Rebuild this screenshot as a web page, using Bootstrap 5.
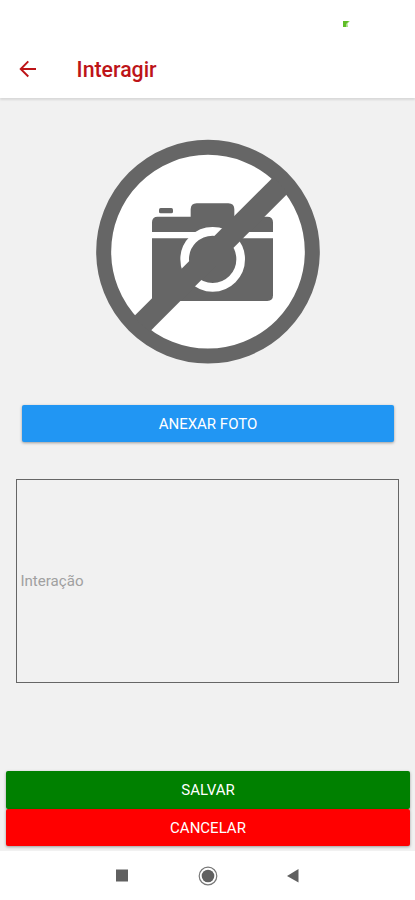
<!DOCTYPE html>
<html lang="pt-BR">
<head>
<meta charset="utf-8">
<meta name="viewport" content="width=device-width, initial-scale=1">
<title>Interagir</title>
<link href="https://cdn.jsdelivr.net/npm/bootstrap@5.3.0/dist/css/bootstrap.min.css" rel="stylesheet">
<style>
body { font-family: Roboto, "Liberation Sans", sans-serif; background: #fff; }
.screen { height: 900px; }
.status-strip { height: 40px; padding: 21px 65px 0 0; }
.app-header { height: 58px; padding: 0 19px; color: #bd1418; box-shadow: 0 2px 2px rgba(0,0,0,.1); z-index: 1; }
.app-title { font-size: 21.3px; font-weight: 500; line-height: 24px; margin-left: 38.6px; padding-top: 2px; }
.page-body { background: #f1f1f1; padding: 32px 5px 5px 6px; }
.photo-area { height: 240px; }
.action { --bs-btn-color: #fff; --bs-btn-hover-color: #fff; --bs-btn-border-width: 0; --bs-btn-border-radius: 2px; --bs-btn-padding-y: 0;
  height: 37.5px; font-size: 15px; line-height: 37px; padding-top: 1px; box-shadow: 0 1px 3px rgba(0,0,0,.36); }
.action-attach { --bs-btn-bg: #2196f3; --bs-btn-hover-bg: #1e88e5; height: 37px; margin: 35px 16px 0; }
.action-save { --bs-btn-bg: #008000; --bs-btn-hover-bg: #007000; }
.action-cancel { --bs-btn-bg: #f00; --bs-btn-hover-bg: #e00000; }
.note { height: 204px; margin: 37px 11px 0 10px; border: 1px solid #666; color: #a0a0a0; font-size: 15.1px; padding: 0 3.4px; }
.system-nav { height: 49px; }
</style>
<script src="https://cdn.jsdelivr.net/npm/bootstrap@5.3.0/dist/js/bootstrap.bundle.min.js"></script>
</head>
<body>
<div class="screen d-flex flex-column overflow-hidden">
  <div class="status-strip d-flex justify-content-end flex-shrink-0">
    <svg width="8" height="7" viewBox="0 0 8 7"><path d="M1 0h7L5.5 2.5 6 6H1z" fill="#a9df86"/><path d="M1 0h6L4 3v3H1z" fill="#5fbd26"/></svg>
  </div>
  <header class="app-header d-flex align-items-center flex-shrink-0 position-relative">
    <svg width="19" height="18" viewBox="0 0 19 18" fill="none" stroke="currentColor" stroke-width="1.9"><path d="M17 9H2M9.3 1.3 1.7 9l7.6 7.5"/></svg>
    <h1 class="app-title mb-0">Interagir</h1>
  </header>
  <main class="page-body d-flex flex-column flex-grow-1">
    <div class="photo-area d-flex justify-content-center flex-shrink-0">
      <svg width="260" height="240" viewBox="-6 0 780 720" fill="#666">
        <circle cx="384" cy="365" r="313" fill="#fff" stroke="#666" stroke-width="45"/>
        <rect x="237" y="234" width="42" height="16" rx="5"/>
        <path d="M216 306v-29q0-17 17-17h99v-22q0-18 18-18h95q18 0 18 18v22h99q17 0 17 17v29z"/>
        <path d="M216 325h363v171q0 17-17 17H216z"/>
        <circle cx="398" cy="388" r="84" stroke="#fff" stroke-width="26"/>
        <path d="M160 561 581 140 624 190 209 605z"/>
      </svg>
    </div>
    <button type="button" class="btn action action-attach">ANEXAR FOTO</button>
    <div class="note d-flex align-items-center">Interação</div>
    <div class="mt-auto d-flex flex-column">
      <button type="button" class="btn action action-save">SALVAR</button>
      <button type="button" class="btn action action-cancel">CANCELAR</button>
    </div>
  </main>
  <nav class="system-nav bg-white flex-shrink-0 d-flex justify-content-center align-items-center position-relative">
    <svg width="190" height="22" viewBox="113 865 190 22" fill="#606060">
      <rect x="116" y="869.5" width="12" height="12"/>
      <circle cx="208" cy="876" r="6.3"/>
      <circle cx="208" cy="876" r="8.8" fill="none" stroke="#777" stroke-width="1.2"/>
      <path d="M287 876 298.5 869v13.5z"/>
    </svg>
  </nav>
</div>
</body>
</html>
